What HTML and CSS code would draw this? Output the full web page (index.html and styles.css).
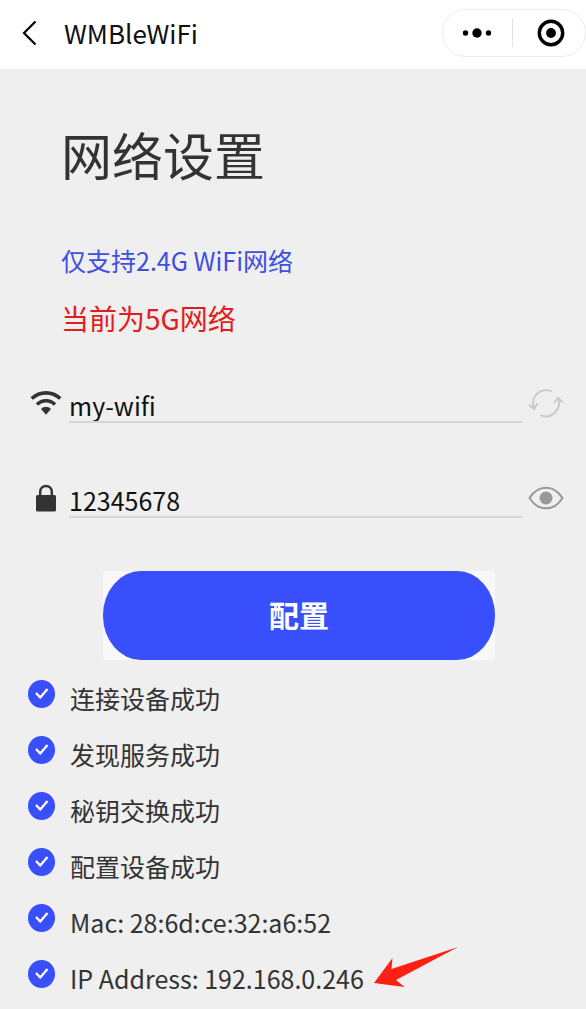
FILE: index.html
```html
<!DOCTYPE html>
<html lang="zh-CN">
<head>
<meta charset="utf-8">
<meta name="viewport" content="width=device-width, initial-scale=1">
<title>WMBleWiFi</title>
<link rel="stylesheet" href="styles.css">
</head>
<body>
<svg class="defs" aria-hidden="true">
  <symbol id="done" viewBox="0 0 27 28">
    <ellipse cx="13.5" cy="14" rx="13.5" ry="14" fill="#384ffb"/>
    <path d="M8 13l4.200 4.500 7.300-8.500" fill="none" stroke="#fff" stroke-width="2.3"/>
  </symbol>
</svg>
<header class="navbar">
  <button class="icon-button back" type="button" aria-label="返回">
    <svg width="16" height="26" viewBox="0 0 16 26"><path d="M14.500 1.5L3 13 14.500 24.500" fill="none" stroke="#000" stroke-width="2.200"/></svg>
  </button>
  <span class="app-name">WMBleWiFi</span>
  <div class="capsule">
    <button class="icon-button capsule-part" type="button" aria-label="更多">
      <svg width="30" height="12" viewBox="0 0 30 12"><circle cx="3.5" cy="6" r="2.7"/><circle cx="15" cy="6" r="4.7"/><circle cx="26.500" cy="6" r="2.7"/></svg>
    </button>
    <span class="divider"></span>
    <button class="icon-button capsule-part capsule-close" type="button" aria-label="关闭">
      <svg width="28" height="28" viewBox="0 0 28 28"><circle cx="14" cy="14" r="11.700" fill="none" stroke="#000" stroke-width="3.400"/><circle cx="14" cy="14" r="4.900"/></svg>
    </button>
  </div>
</header>
<main class="page">
  <div class="intro">
    <h1 class="title">网络设置</h1>
    <p class="hint">仅支持2.4G WiFi网络</p>
    <p class="warning">当前为5G网络</p>
  </div>
  <form class="form">
    <div class="field">
      <label class="field-icon" for="ssid" aria-label="WiFi">
        <svg width="32" height="26" viewBox="0 0 32 26"><g fill="none" stroke="#333" stroke-width="3.600"><path d="M1.700 8.500C10 1 22 1 30.300 8.500"/><path d="M7 14.500c5.200-5 12.800-5 18 0"/></g><path d="M11 19c3-2.900 7-2.900 10 0l-5 5.700z" fill="#333"/></svg>
      </label>
      <input class="field-input" id="ssid" type="text" value="my-wifi">
      <button class="icon-button field-action" type="button" aria-label="刷新">
        <svg width="36" height="32" viewBox="0 0 36 32" fill="none" stroke="#c9c9c9" stroke-width="2"><path d="M23.700 4.400A13.200 13.200 0 0 0 6 21.500"/><path d="M1 18l5 4 3.500-5.700"/><path d="M12.300 28.200A13.200 13.200 0 0 0 30 11.500"/><path d="M26 16l3.800-5 5 4.300"/></svg>
      </button>
    </div>
    <div class="field">
      <label class="field-icon" for="password" aria-label="密码">
        <svg width="22" height="28" viewBox="0 0 22 28"><rect x="1" y="11" width="20" height="16.500" rx="1.500" fill="#333"/><path d="M5.200 12V7.800C5.200 0 16.800 0 16.800 7.800V12" fill="none" stroke="#333" stroke-width="2.400"/></svg>
      </label>
      <input class="field-input" id="password" type="text" value="12345678">
      <button class="icon-button field-action" type="button" aria-label="显示密码">
        <svg width="36" height="26" viewBox="0 0 36 26"><path d="M1.500 13C10-.8 26-.8 34.500 13 26 26.800 10 26.800 1.500 13z" fill="none" stroke="#999" stroke-width="2"/><circle cx="18" cy="13" r="6.500" fill="#999"/></svg>
      </button>
    </div>
    <div class="submit-wrap"><button class="submit" type="submit">配置</button></div>
  </form>
  <ul class="steps">
    <li class="step"><svg class="mark"><use href="#done"/></svg><span>连接设备成功</span></li>
    <li class="step"><svg class="mark"><use href="#done"/></svg><span>发现服务成功</span></li>
    <li class="step"><svg class="mark"><use href="#done"/></svg><span>秘钥交换成功</span></li>
    <li class="step"><svg class="mark"><use href="#done"/></svg><span>配置设备成功</span></li>
    <li class="step"><svg class="mark"><use href="#done"/></svg><span>Mac: 28:6d:ce:32:a6:52</span></li>
    <li class="step"><svg class="mark"><use href="#done"/></svg><span>IP Address: 192.168.0.246</span>
      <svg class="arrow" width="86" height="42" viewBox="0 0 86 42"><path d="M0 37L18.500 12 17.500 23 84 1 22 34 30.500 41z" fill="#ff2014"/></svg>
    </li>
  </ul>
</main>
</body>
</html>
```
FILE: styles.css
```css
* {
  box-sizing: border-box;
}

body {
  margin: 0;
  min-height: 100vh;
  background: #efefef;
  color: #333;
  font-family: "Noto Sans CJK SC", sans-serif;
  font-size: 25px;
}

.defs {
  display: none;
}

svg {
  display: block;
  flex: none;
}

.icon-button {
  display: flex;
  align-items: center;
  justify-content: center;
  padding: 0;
  border: 0;
  background: none;
}

.navbar {
  display: flex;
  align-items: center;
  height: 69px;
  padding: 0 0 4px 21px;
  background: #fff;
}

.app-name {
  flex: 1;
  margin-left: 27px;
  color: #111;
  font-size: 26px;
  line-height: 40px;
}

.capsule {
  display: flex;
  align-items: center;
  width: 144px;
  height: 48px;
  border: 1px solid #ececec;
  border-radius: 24px;
}

.capsule-part {
  flex: 1;
  height: 100%;
}

.capsule-close {
  padding-left: 4px;
}

.divider {
  width: 1px;
  height: 28px;
  background: #e2e2e2;
}

.page {
  padding-top: 53px;
}

.intro {
  padding: 0 61px;
}

.title {
  margin: 0 0 54px;
  font-size: 51px;
  font-weight: 400;
  line-height: 64px;
}

.hint,
.warning {
  margin: 0 0 18px;
  line-height: 40px;
}

.hint {
  color: #3f50e0;
}

.warning {
  margin-bottom: 47px;
  color: #e21d1d;
  font-size: 28px;
}

.field {
  display: flex;
  align-items: center;
  height: 38px;
  margin-bottom: 57px;
  padding: 0 22px;
}

.field-icon {
  display: flex;
  justify-content: center;
  width: 47px;
  padding-bottom: 2px;
}

.field-input {
  flex: 1;
  min-width: 0;
  height: 38px;
  padding: 4px 0 0;
  border: 0;
  border-bottom: 2px solid #d6d6d6;
  background: none;
  color: #111;
  font: inherit;
  line-height: 32px;
}

.field-action {
  margin-left: 6px;
  padding-bottom: 2px;
}

.submit-wrap {
  margin: -4px 91px 0 103px;
  border-radius: 4px;
  background: #f8f8f8;
}

.submit {
  display: block;
  width: 100%;
  height: 89px;
  padding: 0 0 4px;
  border: 0;
  border-radius: 38px / 44px;
  background: #384ffb;
  color: #fff;
  font: inherit;
  font-size: 30px;
  font-weight: 700;
}

.steps {
  margin: 0;
  padding: 10px 28px 0;
  list-style: none;
}

.step {
  display: flex;
  align-items: center;
  height: 56px;
}

.mark {
  width: 27px;
  height: 28px;
  margin: 0 15px 8px 0;
}

.arrow {
  margin: 0 0 22px 10px;
}
```
